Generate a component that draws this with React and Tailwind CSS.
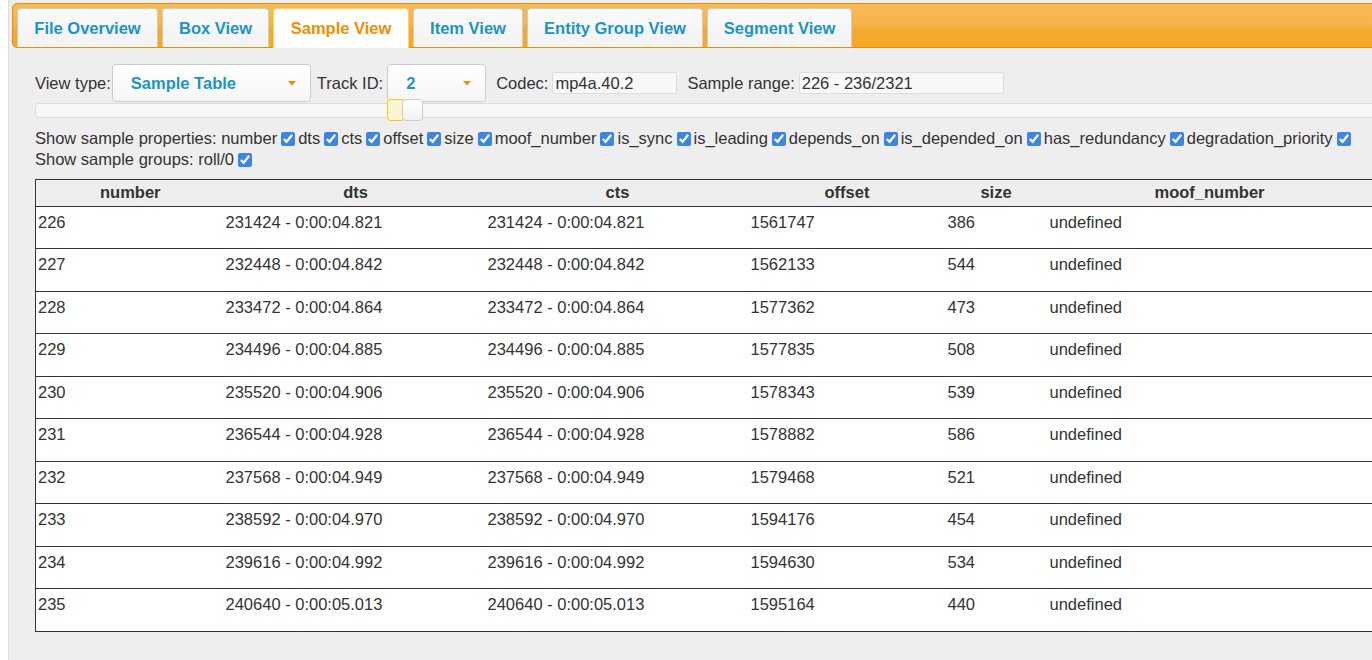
import React from 'react';

const tabs = [
  { label: 'File Overview', w: 'w-[141px]' },
  { label: 'Box View', w: 'w-[107px]' },
  { label: 'Sample View', w: 'w-[136px]', active: true },
  { label: 'Item View', w: 'w-[110px]' },
  { label: 'Entity Group View', w: 'w-[176px]' },
  { label: 'Segment View', w: 'w-[145px]' },
];

const props = [
  'number', 'dts', 'cts', 'offset', 'size', 'moof_number', 'is_sync', 'is_leading',
  'depends_on', 'is_depended_on', 'has_redundancy', 'degradation_priority',
];

const columns = [
  { name: 'number', w: 'w-[189px]' },
  { name: 'dts', w: 'w-[262px]' },
  { name: 'cts', w: 'w-[262px]' },
  { name: 'offset', w: 'w-[197px]' },
  { name: 'size', w: 'w-[101px]' },
  { name: 'moof_number', w: 'w-[326px]' },
  { name: 'is_sync', w: 'w-[120px]' },
  { name: 'is_leading', w: 'w-[120px]' },
];

const rows = [
  [226, '231424 - 0:00:04.821', 1561747, 386],
  [227, '232448 - 0:00:04.842', 1562133, 544],
  [228, '233472 - 0:00:04.864', 1577362, 473],
  [229, '234496 - 0:00:04.885', 1577835, 508],
  [230, '235520 - 0:00:04.906', 1578343, 539],
  [231, '236544 - 0:00:04.928', 1578882, 586],
  [232, '237568 - 0:00:04.949', 1579468, 521],
  [233, '238592 - 0:00:04.970', 1594176, 454],
  [234, '239616 - 0:00:04.992', 1594630, 534],
  [235, '240640 - 0:00:05.013', 1595164, 440],
];

const Arrow = () => (
  <svg width="8" height="5" viewBox="0 0 8 5" className="block">
    <polygon points="0,0 8,0 4,4.5" fill="#ef8c08" />
  </svg>
);

const Check = () => (
  <input
    type="checkbox"
    checked
    readOnly
    className="ml-[4px] mr-[3px] w-[14px] h-[14px] align-[-2px] accent-[#3b86e4]"
  />
);

const Select = ({ value, w }) => (
  <div className={`${w} h-[38px] flex items-center justify-between pl-[18px] pr-[14px] border border-[#cccccc] rounded-[4px] bg-[linear-gradient(#ffffff,#f6f6f6)] text-[#1c94c4] font-bold text-[16.5px]`}>
    <span>{value}</span>
    <Arrow />
  </div>
);

export default function App() {
  return (
    <div className="w-[1372px] h-[660px] overflow-hidden bg-white text-[#333333] text-[16.5px] font-['Liberation_Sans',Arial,sans-serif]">
      <div className="ml-[8px] w-[2400px] h-full bg-[#eeeeee] border-l border-[#dddddd] pt-[3px] pl-[3px]">
        {/* tab header */}
        <div className="h-[45px] flex items-end gap-[4px] pl-[4px] border border-[#e78f08] rounded-l-[5px] bg-[linear-gradient(#f8b955_0%,#f7b44d_45%,#f6a92f_60%,#f6a828_100%)]">
          {tabs.map((t) =>
            t.active ? (
              <div
                key={t.label}
                className={`${t.w} h-[40px] mb-[-1px] flex items-center justify-center border border-b-0 border-[#fbd850] rounded-t-[4px] bg-white text-[#eb8f00] font-bold text-[16.5px]`}
              >
                {t.label}
              </div>
            ) : (
              <div
                key={t.label}
                className={`${t.w} h-[39px] flex items-center justify-center border border-b-0 border-[#cccccc] rounded-t-[4px] bg-[linear-gradient(#fafafa,#f2f2f2)] text-[#1c94c4] font-bold text-[16.5px]`}
              >
                {t.label}
              </div>
            )
          )}
        </div>

        <div className="pl-[23px] pt-[16px]">
          {/* controls */}
          <div className="flex items-center h-[38px]">
            <span>View type:</span>
            <div className="ml-[1px]">
              <Select value="Sample Table" w="w-[199px]" />
            </div>
            <span className="ml-[6px]">Track ID:</span>
            <div className="ml-[4px]">
              <Select value="2" w="w-[99px]" />
            </div>
            <span className="ml-[10px]">Codec:</span>
            <div className="ml-[4px] w-[125px] h-[22px] flex items-center pl-[2px] border border-[#dddddd] rounded-[3px] bg-[#f8f8f8]">
              mp4a.40.2
            </div>
            <span className="ml-[10px]">Sample range:</span>
            <div className="ml-[4px] w-[205px] h-[22px] flex items-center pl-[2px] border border-[#dddddd] rounded-[3px] bg-[#f8f8f8]">
              226 - 236/2321
            </div>
          </div>

          {/* slider */}
          <div className="relative mt-[1px] w-[2330px] h-[15px] border border-[#dddddd] rounded-[4px] bg-[#f7f7f7]">
            <div className="absolute left-[351px] top-[-5px] w-[18px] h-[22px] border border-[#fbcb09] rounded-[4px] bg-[#fdf5ce]" />
            <div className="absolute left-[366px] top-[-5px] w-[21px] h-[22px] border border-[#cccccc] rounded-[4px] bg-[linear-gradient(#ffffff,#f2f2f2)]" />
          </div>

          {/* checkboxes */}
          <div className="mt-[10px] leading-[21px]">
            <div>
              Show sample properties:{' '}
              {props.map((p) => (
                <span key={p}>
                  {p}
                  <Check />
                </span>
              ))}
            </div>
            <div>
              Show sample groups: roll/0
              <Check />
            </div>
          </div>

          {/* table */}
          <table className="mt-[9px] table-fixed border-collapse border border-[#333333] w-[1577px]">
            <thead>
              <tr className="bg-[#eeeeee]">
                {columns.map((c) => (
                  <th key={c.name} className={`${c.w} h-[26.5px] p-0 font-bold text-center`}>
                    {c.name}
                  </th>
                ))}
              </tr>
            </thead>
            <tbody className="bg-white">
              {rows.map((r) => (
                <tr key={r[0]} className="border-t border-[#333333]">
                  <td className="h-[42.5px] align-top pt-[3px] pl-[2px]">{r[0]}</td>
                  <td className="align-top pt-[3px] pl-[1px]">{r[1]}</td>
                  <td className="align-top pt-[3px] pl-[1px]">{r[1]}</td>
                  <td className="align-top pt-[3px] pl-[2px]">{r[2]}</td>
                  <td className="align-top pt-[3px] pl-[2px]">{r[3]}</td>
                  <td className="align-top pt-[3px] pl-[3px]">undefined</td>
                  <td className="align-top pt-[3px] pl-[2px]">false</td>
                  <td className="align-top pt-[3px] pl-[2px]">0</td>
                </tr>
              ))}
            </tbody>
          </table>
        </div>
      </div>
    </div>
  );
}
